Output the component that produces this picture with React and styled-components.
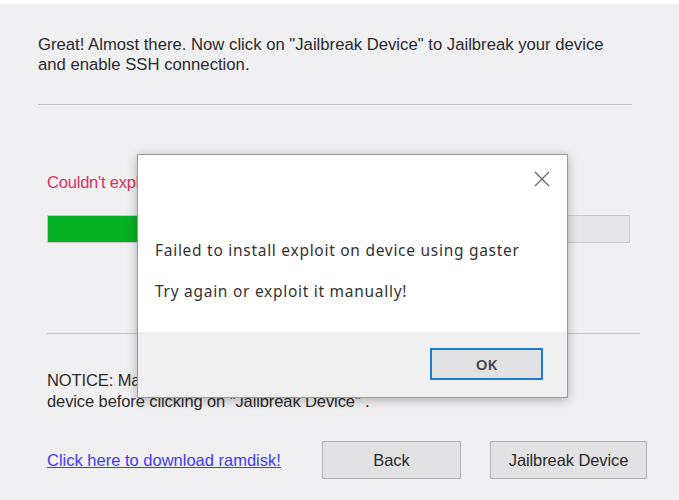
import React from "react";
import styled, { createGlobalStyle } from "styled-components";

const GlobalStyle = createGlobalStyle`
  html, body {
    margin: 0;
    padding: 0;
    background: #ffffff;
  }
`;

const WINDOW_BG = "#f0eff2";
const TEXT_SIZE = "16.5px";

const Window = styled.div`
  position: relative;
  box-sizing: border-box;
  width: 679px;
  height: 500px;
  margin-top: 4px;
  background: ${WINDOW_BG};
  font-family: "Liberation Sans", Arial, sans-serif;
  color: #2b2b2b;
  overflow: hidden;
`;

const Header = styled.section`
  padding: 31px 47px 0 38px;
`;

const Intro = styled.p`
  margin: 0;
  font-size: 16.7px;
  line-height: 20px;
  letter-spacing: 0;
  white-space: nowrap;
`;

const Divider = styled.hr`
  margin: ${(p) => p.$top}px 0 0 0;
  border: 0;
  border-top: 1px solid #c4c3c6;
  height: 0;
`;

const Content = styled.section`
  padding: 0 39px 0 47px;
`;

const Status = styled.div`
  margin-top: 67px;
  font-size: ${TEXT_SIZE};
  line-height: 20px;
  letter-spacing: -0.2px;
  color: #d7335a;
`;

const Progress = styled.div`
  margin-top: 23px;
  margin-right: 10px;
  height: 28px;
  box-sizing: border-box;
  border: 1px solid #c9c9cb;
  background: #e6e6e8;
`;

const ProgressFill = styled.div`
  height: 100%;
  background: #06b025;
`;

const Notice = styled.p`
  margin: 36px 0 0 0;
  font-size: ${TEXT_SIZE};
  line-height: 21px;
  letter-spacing: -0.1px;
  white-space: nowrap;
`;

const Footer = styled.div`
  display: flex;
  align-items: center;
  margin-top: 29px;
  padding-right: 32px;
  padding-left: 47px;
  gap: 29px;
`;

const DownloadLink = styled.a`
  margin-right: auto;
  font-size: ${TEXT_SIZE};
  letter-spacing: 0;
  color: #3d3df0;
  text-decoration: underline;
  cursor: pointer;
`;

const WinButton = styled.button`
  box-sizing: border-box;
  width: ${(p) => p.$width}px;
  height: 38px;
  border: 1px solid #b3b3b5;
  background: #e2e1e4;
  font-family: "Liberation Sans", Arial, sans-serif;
  font-size: ${TEXT_SIZE};
  letter-spacing: -0.1px;
  color: #2b2b2b;
  padding: 0;
`;

const Dialog = styled.div`
  position: absolute;
  left: 137px;
  top: 150px;
  width: 431px;
  height: 244px;
  box-sizing: border-box;
  border: 1px solid #9a9a9c;
  background: #ffffff;
  box-shadow: 0 2px 10px rgba(0, 0, 0, 0.28);
  display: flex;
  flex-direction: column;
  font-family: "Noto Sans", "Open Sans", sans-serif;
  color: #333333;
`;

const DialogBody = styled.div`
  position: relative;
  flex: 1;
  padding: 81px 18px 0 17px;
`;

const CloseButton = styled.button`
  position: absolute;
  top: 15px;
  right: 16px;
  width: 18px;
  height: 18px;
  padding: 0;
  border: 0;
  background: transparent;
  display: flex;
  align-items: center;
  justify-content: center;
`;

const Message = styled.p`
  margin: 0 0 13px 0;
  font-size: 15.5px;
  line-height: 28px;
  letter-spacing: 0.72px;
  white-space: nowrap;
`;

const DialogFooter = styled.div`
  height: 65px;
  box-sizing: border-box;
  background: #f0f0f0;
  display: flex;
  justify-content: flex-end;
  align-items: flex-start;
  padding: 16px 24px 0 0;
`;

const OkButton = styled.button`
  box-sizing: border-box;
  width: 113px;
  height: 32px;
  border: 2px solid #1a7bd4;
  background: #e2e1e4;
  font-family: "Noto Sans", "Open Sans", sans-serif;
  font-size: 15px;
  font-weight: 600;
  color: #444;
  padding: 0;
`;

const CloseIcon = () => (
  <svg width="16" height="16" viewBox="0 0 16 16">
    <path d="M1 1 L15 15 M15 1 L1 15" stroke="#666" strokeWidth="1.2" fill="none" />
  </svg>
);

export default function App() {
  return (
    <>
      <GlobalStyle />
      <Window>
        <Header>
          <Intro>
            Great! Almost there. Now click on "Jailbreak Device" to Jailbreak your device
            <br />
            and enable SSH connection.
          </Intro>
          <Divider $top={29} />
        </Header>
        <Content>
          <Status>Couldn't exploit device using gaster</Status>
          <Progress>
            <ProgressFill style={{ width: "45%" }} />
          </Progress>
          <Divider $top={90} />
          <Notice>
            NOTICE: Make sure you have booted ramdisk on your
            <br />
            device before clicking on "Jailbreak Device" .
          </Notice>
        </Content>
        <Footer>
          <DownloadLink>Click here to download ramdisk!</DownloadLink>
          <WinButton $width={139}>Back</WinButton>
          <WinButton $width={157}>Jailbreak Device</WinButton>
        </Footer>
        <Dialog>
          <DialogBody>
            <CloseButton aria-label="Close">
              <CloseIcon />
            </CloseButton>
            <Message>Failed to install exploit on device using gaster</Message>
            <Message>Try again or exploit it manually!</Message>
          </DialogBody>
          <DialogFooter>
            <OkButton>OK</OkButton>
          </DialogFooter>
        </Dialog>
      </Window>
    </>
  );
}
